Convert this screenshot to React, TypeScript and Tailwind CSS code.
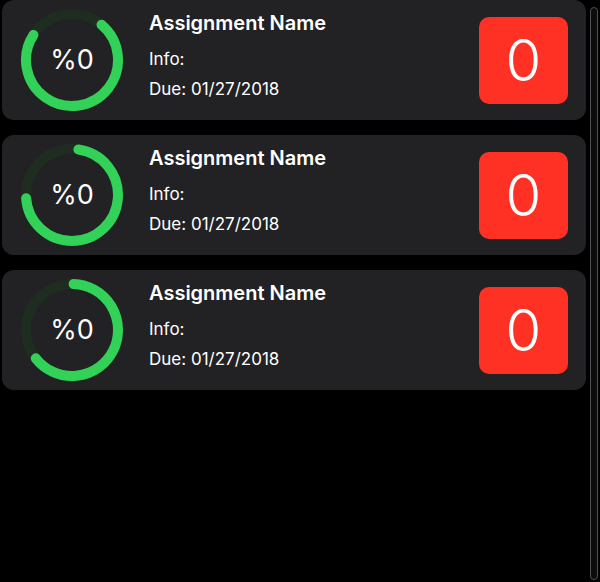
type Assignment = {
  id: number;
  name: string;
  info: string;
  due: string;
  count: number;
  arcStart: number;
  arcEnd: number;
};

const assignments: Assignment[] = [
  { id: 1, name: 'Assignment Name', info: 'Info:', due: 'Due: 01/27/2018', count: 0, arcStart: 40, arcEnd: 303 },
  { id: 2, name: 'Assignment Name', info: 'Info:', due: 'Due: 01/27/2018', count: 0, arcStart: 8, arcEnd: 266 },
  { id: 3, name: 'Assignment Name', info: 'Info:', due: 'Due: 01/27/2018', count: 0, arcStart: 2, arcEnd: 232 },
];

function point(cx: number, cy: number, r: number, deg: number) {
  const rad = ((deg - 90) * Math.PI) / 180;
  return [cx + r * Math.cos(rad), cy + r * Math.sin(rad)];
}

function ProgressRing({ start, end }: { start: number; end: number }) {
  const c = 52;
  const r = 46;
  const [x1, y1] = point(c, c, r, start);
  const [x2, y2] = point(c, c, r, end);
  const large = end - start > 180 ? 1 : 0;

  return (
    <div className="relative h-[104px] w-[104px] shrink-0">
      <svg width="104" height="104" viewBox="0 0 104 104" className="absolute inset-0">
        <circle cx={c} cy={c} r={r} fill="none" stroke="#1e2d20" strokeWidth="10" />
        <path
          d={`M ${x1} ${y1} A ${r} ${r} 0 ${large} 1 ${x2} ${y2}`}
          fill="none"
          stroke="#32d158"
          strokeWidth="10"
          strokeLinecap="round"
        />
      </svg>
      <div className="absolute inset-0 flex items-center justify-center text-[27px] font-normal text-white">
        %0
      </div>
    </div>
  );
}

function AssignmentCard({ item }: { item: Assignment }) {
  return (
    <div className="flex h-[120px] items-center rounded-xl bg-[#222224] pl-[18px] pr-[18px]">
      <ProgressRing start={item.arcStart} end={item.arcEnd} />
      <div className="ml-[25px] flex min-w-0 flex-1 flex-col self-start pt-[9px] text-white">
        <span className="text-[20px] font-semibold leading-[28px]">{item.name}</span>
        <span className="mt-[11px] text-[17px] leading-[22px]">{item.info}</span>
        <span className="mt-[8px] text-[17px] leading-[22px]">{item.due}</span>
      </div>
      <div className="flex h-[87px] w-[89px] shrink-0 items-center justify-center rounded-[10px] bg-[#ff3124] text-[58px] font-light leading-none text-white">
        {item.count}
      </div>
    </div>
  );
}

export default function App() {
  return (
    <div className="flex h-[582px] w-[600px] bg-black font-['Inter',sans-serif]">
      <div className="flex flex-1 flex-col gap-[15px] pl-[2px] pr-[4px]">
        {assignments.map((a) => (
          <AssignmentCard key={a.id} item={a} />
        ))}
      </div>
      <div className="mr-[2px] mt-[7px] mb-[2px] w-[8px] shrink-0 rounded-full border border-[#505052] bg-[#0c0c0c]" />
    </div>
  );
}
